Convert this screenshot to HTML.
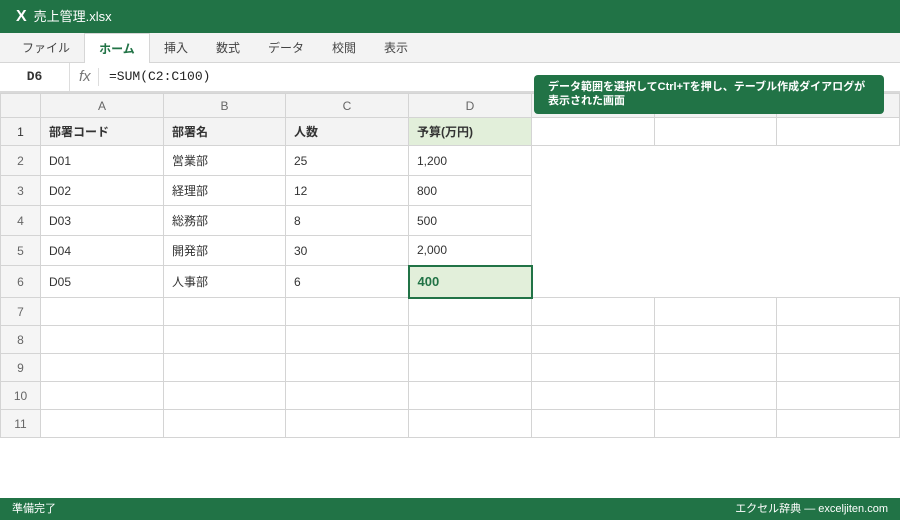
<!DOCTYPE html>
<html><head><meta charset="utf-8"><style>
*{box-sizing:border-box;margin:0;padding:0}
body{width:900px;height:520px;overflow:hidden;background:#fff;font-family:"Liberation Sans","Noto Sans CJK JP",sans-serif;position:relative}
.title{position:absolute;left:0;top:0;width:900px;height:33px;background:#217346;color:#fff;font-size:13px;line-height:33px;padding-left:16px}
.title b{font-size:16px;margin-right:7px}
.ribbon{position:absolute;top:33px;left:0;width:900px;height:30px;background:#f3f3f3;border-bottom:1px solid #d6d6d6}
.tab{position:absolute;top:0;height:30px;line-height:30px;font-size:12px;color:#444;text-align:center}
.tab.act{background:#fff;color:#217346;font-weight:bold;border:1px solid #d6d6d6;border-bottom:none;height:31px}
.fbar{position:absolute;top:63px;left:0;width:900px;height:30px;background:#fff;border-bottom:2px solid #d9d9d9}
.name{position:absolute;left:0;top:0;width:70px;height:28px;line-height:28px;text-align:center;font-weight:bold;font-size:13px;color:#333;font-family:"Liberation Mono",monospace;border-right:1px solid #ddd}
.fx{position:absolute;left:79px;top:5px;font-style:italic;color:#777;font-size:15px;font-family:"Liberation Sans",sans-serif}
.sep{position:absolute;left:98px;top:5px;height:18px;border-left:1px solid #ddd}
.formula{position:absolute;left:109px;top:0;line-height:28px;font-family:"Liberation Mono",monospace;font-size:13px;color:#222}
table{position:absolute;top:93px;left:0;border-collapse:collapse;table-layout:fixed;font-size:12px;color:#333}
td{border:1px solid #d4d4d4;padding-left:8px;white-space:nowrap;overflow:hidden;line-height:16px;vertical-align:middle}
td.rn{background:#f5f5f5;color:#666;text-align:center;padding:0}
tr.hd td{background:#f3f3f3;color:#666;text-align:center;padding:0}
tr.r1 td{background:#f3f3f3;font-weight:bold;color:#333}
tr.r1 td.e{background:#fff}
td.g{background:#e2efda!important}
td.n{border:none}
td.sel{border:2px solid #217346;background:#e2efda;color:#217346;font-weight:bold;font-size:13px}
.tip{position:absolute;left:534px;top:75px;width:350px;height:39px;background:#217346;color:#fff;border-radius:4px;font-size:11px;font-weight:bold;line-height:14px;padding:5px 14px}
.status{position:absolute;left:0;top:498px;width:900px;height:22px;background:#217346;color:#fff;font-size:11px;line-height:22px;padding:0 12px}
.status span{float:right}
</style></head><body>
<div class="title"><b>X</b>売上管理.xlsx</div>
<div class="ribbon">
<div class="tab" style="left:10px;width:72px">ファイル</div>
<div class="tab act" style="left:84px;width:66px">ホーム</div>
<div class="tab" style="left:152px;width:48px">挿入</div>
<div class="tab" style="left:204px;width:48px">数式</div>
<div class="tab" style="left:258px;width:56px">データ</div>
<div class="tab" style="left:320px;width:48px">校閲</div>
<div class="tab" style="left:372px;width:48px">表示</div>
</div>
<div class="fbar"><div class="name">D6</div><div class="fx">fx</div><div class="sep"></div><div class="formula">=SUM(C2:C100)</div></div>
<table>
<colgroup><col style="width:40px"><col style="width:123px"><col style="width:122px"><col style="width:123px"><col style="width:123px"><col style="width:123px"><col style="width:122px"><col style="width:123px"></colgroup>
<tr class="hd" style="height:24px"><td></td><td>A</td><td>B</td><td>C</td><td>D</td><td>E</td><td>F</td><td>G</td></tr>
<tr class="r1" style="height:28px"><td class="rn" style="font-weight:normal">1</td><td>部署コード</td><td>部署名</td><td>人数</td><td class="g">予算(万円)</td><td class="e"></td><td class="e"></td><td class="e"></td></tr>
<tr style="height:30px"><td class="rn">2</td><td>D01</td><td>営業部</td><td>25</td><td>1,200</td><td class="n"></td><td class="n"></td><td class="n"></td></tr>
<tr style="height:30px"><td class="rn">3</td><td>D02</td><td>経理部</td><td>12</td><td>800</td><td class="n"></td><td class="n"></td><td class="n"></td></tr>
<tr style="height:30px"><td class="rn">4</td><td>D03</td><td>総務部</td><td>8</td><td>500</td><td class="n"></td><td class="n"></td><td class="n"></td></tr>
<tr style="height:30px"><td class="rn">5</td><td>D04</td><td>開発部</td><td>30</td><td>2,000</td><td class="n"></td><td class="n"></td><td class="n"></td></tr>
<tr style="height:32px"><td class="rn">6</td><td>D05</td><td>人事部</td><td>6</td><td class="sel">400</td><td class="n"></td><td class="n"></td><td class="n"></td></tr>
<tr style="height:28px"><td class="rn">7</td><td></td><td></td><td></td><td></td><td></td><td></td><td></td></tr>
<tr style="height:28px"><td class="rn">8</td><td></td><td></td><td></td><td></td><td></td><td></td><td></td></tr>
<tr style="height:28px"><td class="rn">9</td><td></td><td></td><td></td><td></td><td></td><td></td><td></td></tr>
<tr style="height:28px"><td class="rn">10</td><td></td><td></td><td></td><td></td><td></td><td></td><td></td></tr>
<tr style="height:28px"><td class="rn">11</td><td></td><td></td><td></td><td></td><td></td><td></td><td></td></tr>
</table>
<div class="tip">データ範囲を選択してCtrl+Tを押し、テーブル作成ダイアログが<br>表示された画面</div>
<div class="status">準備完了<span>エクセル辞典 — exceljiten.com</span></div>
</body></html>
